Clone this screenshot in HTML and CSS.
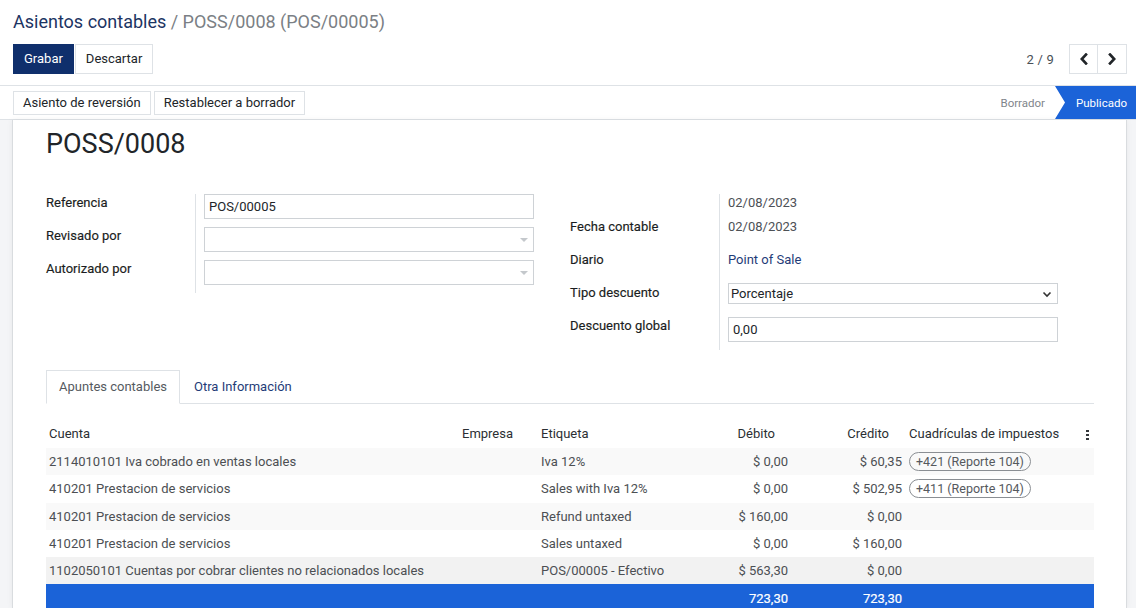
FILE: index.html
```html
<!DOCTYPE html>
<html lang="es">
<head>
<meta charset="utf-8">
<title>Asientos contables</title>
<link rel="stylesheet" href="styles.css">
</head>
<body>
<div class="cp">
  <div class="crumbs"><span class="crumb-link">Asientos contables</span><span class="crumb-cur"> / POSS/0008 (POS/00005)</span></div>
  <div class="cp-bottom">
    <div class="cp-buttons">
      <button class="btn btn-primary">Grabar</button>
      <button class="btn btn-secondary">Descartar</button>
    </div>
    <div class="pager">
      <span class="pager-value">2 / 9</span>
      <div class="pager-btns">
        <button class="btn pager-btn"><svg width="10" height="12" viewBox="0 0 10 12"><polyline points="7,1.5 2.8,6 7,10.5" fill="none" stroke="#212529" stroke-width="2.6" stroke-linecap="square"/></svg></button>
        <button class="btn pager-btn"><svg width="10" height="12" viewBox="0 0 10 12"><polyline points="3,1.5 7.2,6 3,10.5" fill="none" stroke="#212529" stroke-width="2.6" stroke-linecap="square"/></svg></button>
      </div>
    </div>
  </div>
</div>
<div class="statusbar">
  <div class="sb-buttons">
    <button class="btn btn-secondary btn-sm">Asiento de reversión</button>
    <button class="btn btn-secondary btn-sm">Restablecer a borrador</button>
  </div>
  <div class="sb-status">
    <span class="st st-draft">Borrador</span>
    <span class="st st-current">Publicado</span>
  </div>
</div>
<div class="sheet-wrap">
  <div class="sheet">
    <h1 class="title">POSS/0008</h1>
    <div class="groups">
      <div class="group">
        <div class="frow"><div class="lbl">Referencia</div><div class="val"><div class="input">POS/00005</div></div></div>
        <div class="frow"><div class="lbl">Revisado por</div><div class="val"><div class="input m2o"><span class="caret"></span></div></div></div>
        <div class="frow"><div class="lbl">Autorizado por</div><div class="val"><div class="input m2o"><span class="caret"></span></div></div></div>
      </div>
      <div class="group">
        <div class="frow frow-short"><div class="lbl"></div><div class="val"><span class="text">02/08/2023</span></div></div>
        <div class="frow"><div class="lbl">Fecha contable</div><div class="val"><span class="text">02/08/2023</span></div></div>
        <div class="frow"><div class="lbl">Diario</div><div class="val"><span class="link">Point of Sale</span></div></div>
        <div class="frow"><div class="lbl">Tipo descuento</div><div class="val"><div class="select">Porcentaje<svg class="sel-arrow" width="10" height="7" viewBox="0 0 10 7"><polyline points="1.5,1.5 5,5 8.5,1.5" fill="none" stroke="#333" stroke-width="1.6"/></svg></div></div></div>
        <div class="frow"><div class="lbl">Descuento global</div><div class="val"><div class="input">0,00</div></div></div>
      </div>
    </div>
    <div class="tabs">
      <span class="tab tab-active">Apuntes contables</span>
      <span class="tab">Otra Información</span>
    </div>
    <table class="list">
      <colgroup>
        <col style="width:412px"><col style="width:80px"><col style="width:167px"><col style="width:86px"><col style="width:114px"><col><col style="width:17px">
      </colgroup>
      <thead>
        <tr><th>Cuenta</th><th class="c-emp">Empresa</th><th>Etiqueta</th><th class="num">Débito</th><th class="num">Crédito</th><th class="c-tax">Cuadrículas de impuestos</th><th class="c-opt"><span class="kebab"><i></i><i></i><i></i></span></th></tr>
      </thead>
      <tbody>
        <tr class="odd"><td>2114010101 Iva cobrado en ventas locales</td><td></td><td>Iva 12%</td><td class="num">$ 0,00</td><td class="num">$ 60,35</td><td class="c-tax"><span class="pill">+421 (Reporte 104)</span></td><td></td></tr>
        <tr><td>410201 Prestacion de servicios</td><td></td><td>Sales with Iva 12%</td><td class="num">$ 0,00</td><td class="num">$ 502,95</td><td class="c-tax"><span class="pill">+411 (Reporte 104)</span></td><td></td></tr>
        <tr class="odd"><td>410201 Prestacion de servicios</td><td></td><td>Refund untaxed</td><td class="num">$ 160,00</td><td class="num">$ 0,00</td><td class="c-tax"></td><td></td></tr>
        <tr><td>410201 Prestacion de servicios</td><td></td><td>Sales untaxed</td><td class="num">$ 0,00</td><td class="num">$ 160,00</td><td class="c-tax"></td><td></td></tr>
        <tr class="hover"><td>1102050101 Cuentas por cobrar clientes no relacionados locales</td><td></td><td>POS/00005 - Efectivo</td><td class="num">$ 563,30</td><td class="num">$ 0,00</td><td class="c-tax"></td><td></td></tr>
      </tbody>
      <tfoot>
        <tr><td></td><td></td><td></td><td class="num">723,30</td><td class="num">723,30</td><td></td><td></td></tr>
      </tfoot>
    </table>
  </div>
</div>
</body>
</html>
```
FILE: styles.css
```css
* { box-sizing: border-box; }
html, body { margin: 0; padding: 0; }
body {
  font-family: Roboto, "Noto Sans", sans-serif;
  font-size: 13px;
  color: #212529;
  background: #f4f5f7;
  width: 1136px;
  height: 608px;
  overflow: hidden;
}
.cp {
  background: #fff;
  padding: 10px 9px 0 13px;
  border-bottom: 1px solid #dee2e6;
  height: 86px;
}
.crumbs {
  font-size: 18px;
  line-height: 24px;
  height: 24px;
}
.crumb-link { color: #1c3463; }
.crumb-cur { color: #7b7f85; }
.cp-bottom {
  margin-top: 10px;
  display: flex;
  justify-content: space-between;
  align-items: center;
}
.cp-buttons { display: flex; gap: 1px; }
.btn {
  font-family: inherit;
  font-size: 13px;
  height: 30px;
  padding: 0 10px;
  border: 1px solid #dee2e6;
  background: #fff;
  color: #212529;
  margin: 0;
  cursor: pointer;
  line-height: 28px;
}
.btn-primary { background: #0f2f6c; border-color: #0f2f6c; color: #fff; }
.btn-sm { height: 24px; line-height: 22px; padding: 0 9px; }
.pager { display: flex; align-items: center; }
.pager-value { color: #495057; margin-right: 15px; letter-spacing: 0.2px; }
.pager-btns { display: flex; }
.pager-btn { width: 29px; padding: 0; display: flex; align-items: center; justify-content: center; }
.pager-btn + .pager-btn { border-left: none; }

.statusbar {
  background: #fff;
  height: 34px;
  border-bottom: 1px solid #dee2e6;
  display: flex;
  justify-content: space-between;
  padding-left: 13px;
}
.sb-buttons { display: flex; gap: 3px; align-items: center; }
.sb-status { display: flex; align-items: stretch; font-size: 11.5px; }
.st { display: flex; align-items: center; }
.st-draft { color: #7f858b; padding-right: 10px; }
.st-current {
  background: #1b63d8;
  color: #fff;
  padding: 0 10px 0 21px;
  width: 81px;
  clip-path: polygon(0 0, 100% 0, 100% 100%, 0 100%, 10px 50%);
}

.sheet-wrap { padding: 0 9px 0 12px; }
.sheet {
  background: #fff;
  border-left: 1px solid #d9dcdf;
  border-right: 1px solid #d9dcdf;
  box-shadow: 0 0 6px rgba(0,0,0,0.06);
  padding: 8px 32px 0 33px;
  height: 488px;
}
.title {
  margin: 0;
  font-size: 27px;
  line-height: 32px;
  font-weight: 400;
  color: #212529;
}
.groups { display: flex; margin-top: 34px; }
.group { width: 50%; }
.frow { display: flex; height: 33px; }
.frow-short { height: 24px; }
.lbl {
  width: 149px;
  line-height: 18px;
  font-weight: 400;
  color: #1a1d21;
  -webkit-text-stroke: 0.15px #1a1d21;
}
.val {
  flex: 1;
  border-left: 1px solid #dee2e6;
  padding: 0 36px 0 8px;
  color: #4c4c4c;
  line-height: 18px;
}
.text { color: #4d5156; }
.link { color: #1f3c78; }
.input {
  height: 25px;
  border: 1px solid #ced2d6;
  padding: 0 4px;
  line-height: 23px;
  color: #212529;
  position: relative;
}
.m2o .caret {
  position: absolute;
  right: 5px;
  top: 10px;
  width: 0; height: 0;
  border-left: 4px solid transparent;
  border-right: 4px solid transparent;
  border-top: 4px solid #c4c8cc;
}
.select {
  height: 21px;
  border: 1px solid #ced2d6;
  padding: 0 2px;
  line-height: 19px;
  color: #212529;
  position: relative;
  margin-top: -1px;
}
.sel-arrow { position: absolute; right: 5px; top: 7px; }

.tabs {
  margin-top: 20px;
  display: flex;
  border-bottom: 1px solid #dee2e6;
  height: 34px;
}
.tab {
  height: 34px;
  line-height: 32px;
  padding: 0 12px 0 13px;
  color: #1f3c78;
  border: 1px solid transparent;
}
.tab-active {
  color: #555a5f;
  border-color: #dee2e6;
  border-bottom-color: #fff;
  background: #fff;
  padding: 0 12px;
}

.list {
  margin-top: 16px;
  width: 100%;
  border-collapse: collapse;
  table-layout: fixed;
}
.list th, .list td {
  height: 27.3px;
  padding: 0 3px;
  white-space: nowrap;
  overflow: hidden;
  text-align: left;
  vertical-align: middle;
}
.list th { font-weight: 400; color: #2b2f33; height: 28px; padding-bottom: 2px; }
.list td { color: #4c4f53; }
.list .num { text-align: right; }
.list th.num { padding-right: 16px; }
.list th.c-emp { padding-left: 4px; }
.list th.c-tax, .list td.c-tax { padding-left: 4px; }
.list th.c-opt { padding: 0 0 2px 3px; text-align: center; }
.list tbody tr.odd td { background: #f9f9f9; }
.list tbody tr.hover td { background: #f2f2f2; }
.list tfoot td {
  background: #1b63d8;
  color: #fff;
  font-weight: 400;
  -webkit-text-stroke: 0.2px #fff;
}
.kebab { display: inline-flex; flex-direction: column; gap: 1.5px; vertical-align: middle; margin-top: 2px; }
.kebab i { display: block; width: 3px; height: 2.5px; background: #33373b; }
.pill {
  display: inline-block;
  border: 1px solid #8a8e93;
  border-radius: 10px;
  padding: 0 6px;
  height: 19px;
  line-height: 17px;
  font-size: 12.5px;
  color: #55595e;
}
```
